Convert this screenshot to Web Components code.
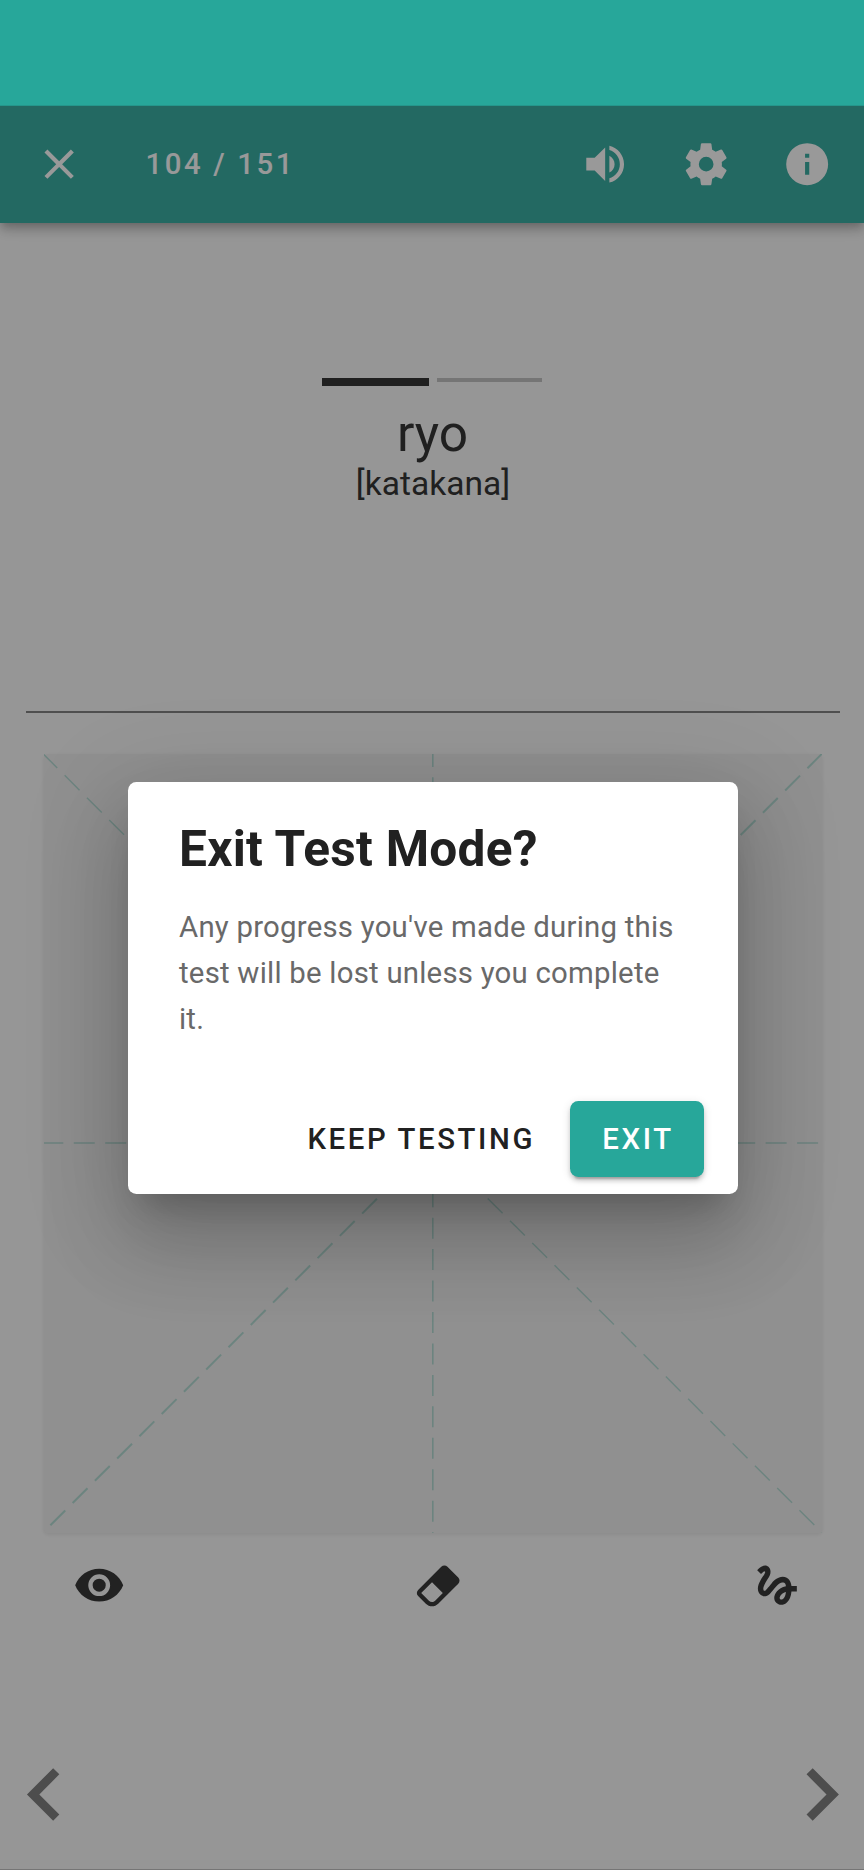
<!DOCTYPE html>
<html lang="en">
<head>
<meta charset="utf-8">
<title>Test Mode</title>
<style>
html,body{margin:0;padding:0}
body{width:864px;height:1870px;overflow:hidden;font-family:Roboto,sans-serif;color:#212121;background:#fafafa}
</style>
</head>
<body>
<test-app></test-app>
<script>
const ICONS = {
  close: 'M19,6.41L17.59,5L12,10.59L6.41,5L5,6.41L10.59,12L5,17.59L6.41,19L12,13.41L17.59,19L19,17.59L13.41,12L19,6.41Z',
  volume: 'M14,3.23V5.29C16.89,6.15 19,8.83 19,12C19,15.17 16.89,17.84 14,18.7V20.77C18,19.86 21,16.28 21,12C21,7.72 18,4.14 14,3.23M16.5,12C16.5,10.23 15.5,8.71 14,7.97V16C15.5,15.29 16.5,13.76 16.5,12M3,9V15H7L12,20V4L7,9H3Z',
  cog: 'M12,15.5A3.5,3.5 0 0,1 8.5,12A3.5,3.5 0 0,1 12,8.5A3.5,3.5 0 0,1 15.5,12A3.5,3.5 0 0,1 12,15.5M19.43,12.97C19.47,12.65 19.5,12.33 19.5,12C19.5,11.67 19.47,11.34 19.43,11L21.54,9.37C21.73,9.22 21.78,8.95 21.66,8.73L19.66,5.27C19.54,5.05 19.27,4.96 19.05,5.05L16.56,6.05C16.04,5.66 15.5,5.32 14.87,5.07L14.5,2.42C14.46,2.18 14.25,2 14,2H10C9.75,2 9.54,2.18 9.5,2.42L9.13,5.07C8.5,5.32 7.96,5.66 7.44,6.05L4.95,5.05C4.73,4.96 4.46,5.05 4.34,5.27L2.34,8.73C2.21,8.95 2.27,9.22 2.46,9.37L4.57,11C4.53,11.34 4.5,11.67 4.5,12C4.5,12.33 4.53,12.65 4.57,12.97L2.46,14.63C2.27,14.78 2.21,15.05 2.34,15.27L4.34,18.73C4.46,18.95 4.73,19.03 4.95,18.95L7.44,17.94C7.96,18.34 8.5,18.68 9.13,18.93L9.5,21.58C9.54,21.82 9.75,22 10,22H14C14.25,22 14.46,21.82 14.5,21.58L14.87,18.93C15.5,18.67 16.04,18.34 16.56,17.94L19.05,18.95C19.27,19.03 19.54,18.95 19.66,18.73L21.66,15.27C21.78,15.05 21.73,14.78 21.54,14.63L19.43,12.97Z',
  info: 'M13,9H11V7H13M13,17H11V11H13M12,2A10,10 0 0,0 2,12A10,10 0 0,0 12,22A10,10 0 0,0 22,12A10,10 0 0,0 12,2Z',
  eye: 'M12,9A3,3 0 0,0 9,12A3,3 0 0,0 12,15A3,3 0 0,0 15,12A3,3 0 0,0 12,9M12,17A5,5 0 0,1 7,12A5,5 0 0,1 12,7A5,5 0 0,1 17,12A5,5 0 0,1 12,17M12,4.5C7,4.5 2.73,7.61 1,12C2.73,16.39 7,19.5 12,19.5C17,19.5 21.27,16.39 23,12C21.27,7.61 17,4.5 12,4.5Z',
  eraser: 'M16.24,3.56L21.19,8.5C21.97,9.29 21.97,10.55 21.19,11.34L12,20.53C10.44,22.09 7.91,22.09 6.34,20.53L2.81,17C2.03,16.21 2.03,14.95 2.81,14.16L13.41,3.56C14.2,2.78 15.46,2.78 16.24,3.56M4.22,15.58L7.76,19.11C8.54,19.9 9.8,19.9 10.59,19.11L14.12,15.58L9.17,10.63L4.22,15.58Z',
  gesture: 'M4.59,6.89C5.29,6.18 6,5.54 6.3,5.67C6.8,5.87 6.3,6.7 6,7.19C5.75,7.61 3.14,11.08 3.14,13.5C3.14,14.78 3.62,15.84 4.5,16.5C5.23,17.04 6.22,17.21 7.12,16.94C8.19,16.63 9.07,15.54 10.18,14.17C11.39,12.68 13,10.73 14.26,10.73C15.89,10.73 15.91,11.74 16,12.5C12.24,13.16 10.64,16.19 10.64,17.89C10.64,19.59 12.08,21 13.85,21C15.5,21 18.14,19.65 18.54,14.88H21V12.38H18.53C18.38,10.73 17.44,8.18 14.5,8.18C12.25,8.18 10.32,10.09 9.56,11C9,11.75 7.5,13.5 7.27,13.74C7,14.04 6.59,14.58 6.16,14.58C5.71,14.58 5.44,13.75 5.8,12.66C6.15,11.57 7.2,9.8 7.65,9.14C8.43,8 8.95,7.22 8.95,5.86C8.95,3.69 7.31,3 6.44,3C5.12,3 3.97,4 3.72,4.25C3.36,4.61 3.06,4.91 2.84,5.18L4.59,6.89M13.88,18.55C13.57,18.55 13.14,18.29 13.14,17.83C13.14,17.23 13.87,15.63 16,15.07C15.7,17.76 14.57,18.55 13.88,18.55Z',
  left: 'M15.41,16.58L10.83,12L15.41,7.41L14,6L8,12L14,18L15.41,16.58Z',
  right: 'M8.59,16.58L13.17,12L8.59,7.41L10,6L16,12L10,18L8.59,16.58Z'
};

function define(name, html) {
  customElements.define(name, class extends HTMLElement {
    constructor() {
      super();
      const t = document.createElement('template');
      t.innerHTML = html;
      this.attachShadow({ mode: 'open' }).append(t.content.cloneNode(true));
    }
  });
}

customElements.define('md-icon', class extends HTMLElement {
  connectedCallback() {
    if (this.shadowRoot) return;
    this.attachShadow({ mode: 'open' }).innerHTML = `
      <style>:host{display:block;flex:none;width:var(--size,50.33px);height:var(--size,50.33px)}
      svg{display:block;width:100%;height:100%;fill:currentColor}</style>
      <svg viewBox="0 0 24 24"><path d="${ICONS[this.getAttribute('name')]}"/></svg>`;
  }
});

define('status-bar', `
  <style>:host{display:block;position:relative;z-index:1;box-sizing:border-box;height:106px;background:#27a79a;border-bottom:1px solid #25968b}</style>`);

define('app-bar', `
  <style>
  :host{display:flex;align-items:center;box-sizing:border-box;height:117px;padding:0 7px 1px 8.6px;background:#26a69a;color:#fff;
    box-shadow:0 4px 8px -2px rgba(0,0,0,.2),0 8px 10px rgba(0,0,0,.14),0 2px 21px rgba(0,0,0,.12)}
  .btn{width:100.65px;display:flex;justify-content:center;flex:none}
  .count{margin-left:36.2px;flex:1;font-weight:500;font-size:29.36px;line-height:40px;letter-spacing:2.62px}
  </style>
  <div class="btn"><md-icon name="close"></md-icon></div>
  <div class="count"><slot></slot></div>
  <div class="btn"><md-icon name="volume"></md-icon></div>
  <div class="btn"><md-icon name="cog"></md-icon></div>
  <div class="btn"><md-icon name="info"></md-icon></div>`);

define('prompt-panel', `
  <style>
  :host{display:flex;flex-direction:column;align-items:center;box-sizing:border-box;height:488px;margin:0 24px 0 26px;padding-top:155px}
  .tabs{display:flex;gap:8px;width:220px;margin-right:2px}
  .tabs i{flex:1;height:4px;background:#bdbdbd}
  .tabs i.on{height:8px;flex-basis:1.5px;background:#212121}
  .word{margin-top:14px;margin-right:1px;font-size:51.4px;line-height:68px}
  .kind{font-size:33.55px;line-height:44px;margin-top:-6px}
  </style>
  <div class="tabs"><i class="on"></i><i></i></div>
  <div class="word"><slot></slot></div>
  <div class="kind"><slot name="kind"></slot></div>`);

define('draw-pad', `
  <style>
  :host{display:block;width:778px;height:779px;margin:41px 0 0 44px;background:#eee;border-radius:4px;
    box-shadow:0 1px 4px rgba(0,0,0,.05),0 2px 5px rgba(0,0,0,.05)}
  svg{display:block;width:778px;height:779px;stroke:#acd8d0;stroke-width:2;fill:none}
  </style>
  <svg viewBox="44 754 778 779">
    <g stroke-dasharray="21 10.45" stroke-width="1.6">
      <path d="M432.8 745.9V1533"/>
      <path d="M42.3 1143H822"/>
    </g>
    <g stroke-dasharray="21 10.49">
      <path d="M822.3 753.4L44 1531.7"/>
      <path d="M42.4 753.1L822 1532.7" stroke-width="1.4"/>
    </g>
  </svg>`);

define('tool-row', `
  <style>
  :host{display:flex;justify-content:space-between;padding:0 60.5px 0 72.5px;margin-top:26.4px;--size:52.4px;color:#242424}
  </style>
  <md-icon name="eye"></md-icon><md-icon name="eraser"></md-icon><md-icon name="gesture"></md-icon>`);

define('page-nav', `
  <style>:host{display:flex;justify-content:space-between;margin:129.8px -9.7px 0 -7.7px;--size:104.85px;color:#737373}</style>
  <md-icon name="left"></md-icon><md-icon name="right"></md-icon>`);

define('md-button', `
  <style>
  :host{display:flex;align-items:center;box-sizing:border-box;height:76px;border-radius:8.4px;font-weight:500;font-size:29.36px;letter-spacing:2.6px;white-space:nowrap}
  :host([raised]){width:134px;justify-content:center;padding-left:2px;background:#27a79a;color:#fff;
    box-shadow:0 6px 2px -4px rgba(0,0,0,.2),0 4px 4px rgba(0,0,0,.14),0 2px 10px rgba(0,0,0,.12)}
  </style>
  <slot></slot>`);

define('confirm-dialog', `
  <style>
  :host{display:block;position:absolute;left:128px;top:781.5px;width:610px;height:412.5px;box-sizing:border-box;padding:34px 34px 0 51px;background:#fff;border-radius:8.4px;
    box-shadow:0 23px 31px -15px rgba(0,0,0,.2),0 50px 80px 6px rgba(0,0,0,.14),0 19px 96px 17px rgba(0,0,0,.12)}
  h1{margin:0;font-size:49.6px;line-height:67px;font-weight:700;letter-spacing:.27px}
  p{margin:21.4px 0 0;width:509px;font-size:29.36px;line-height:46.14px;letter-spacing:.23px;color:#696969}
  .actions{display:flex;justify-content:flex-end;gap:35px;margin-top:58.6px}
  </style>
  <h1><slot name="title"></slot></h1>
  <p><slot></slot></p>
  <div class="actions"><slot name="actions"></slot></div>`);

define('test-app', `
  <style>
  :host{display:block;position:relative;width:864px;height:1870px;overflow:hidden}
  hr{margin:0 24px 0 26px;height:2px;border:0;background:#777}
  .scrim{position:absolute;left:0;top:106px;right:0;bottom:0;background:rgba(33,33,33,.46);border-bottom:1px solid #757575;box-sizing:border-box}
  </style>
  <status-bar></status-bar>
  <app-bar>104 / 151</app-bar>
  <prompt-panel>ryo<span slot="kind">[katakana]</span></prompt-panel>
  <hr>
  <draw-pad></draw-pad>
  <tool-row></tool-row>
  <page-nav></page-nav>
  <div class="scrim"></div>
  <confirm-dialog>
    <span slot="title">Exit Test Mode?</span>
    Any progress you've made during this test will be lost unless you complete it.
    <md-button slot="actions">KEEP TESTING</md-button>
    <md-button slot="actions" raised>EXIT</md-button>
  </confirm-dialog>`);
</script>
</body>
</html>
